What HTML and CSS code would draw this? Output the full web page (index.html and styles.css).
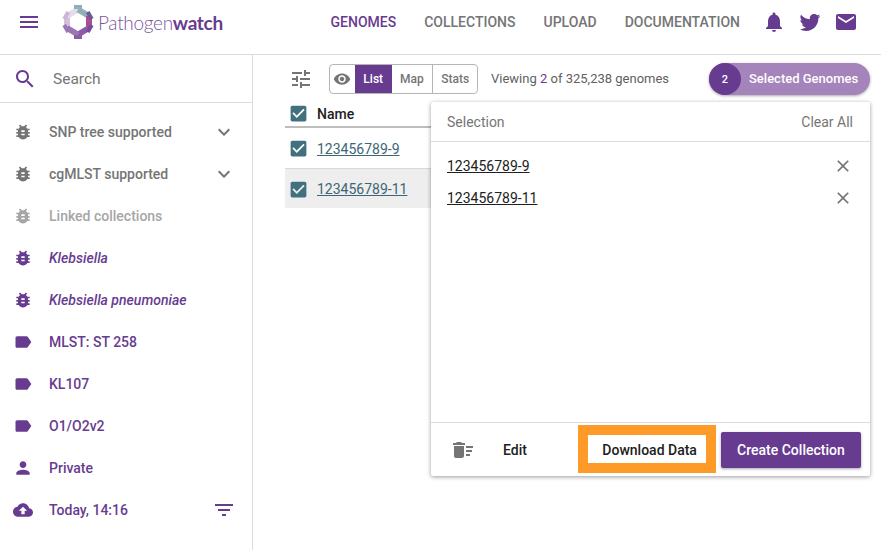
FILE: index.html
```html
<!DOCTYPE html>
<html lang="en">
<head>
<meta charset="utf-8">
<title>Pathogenwatch</title>
<link rel="stylesheet" href="styles.css">
</head>
<body>
<svg class="defs" width="0" height="0" aria-hidden="true">
  <symbol id="i-bug" viewBox="0 0 24 24"><path d="M20 8h-2.81c-.45-.78-1.07-1.45-1.82-1.96L17 4.41 15.59 3l-2.17 2.17C12.96 5.06 12.49 5 12 5c-.49 0-.96.06-1.41.17L8.41 3 7 4.41l1.62 1.63C7.88 6.55 7.26 7.22 6.81 8H4v2h2.09c-.05.33-.09.66-.09 1v1H4v2h2v1c0 .34.04.67.09 1H4v2h2.81c1.04 1.79 2.97 3 5.19 3s4.15-1.21 5.19-3H20v-2h-2.09c.05-.33.09-.66.09-1v-1h2v-2h-2v-1c0-.34-.04-.67-.09-1H20V8zm-6 8h-4v-2h4v2zm0-4h-4v-2h4v2z"/></symbol>
  <symbol id="i-label" viewBox="0 0 24 24"><path d="M17.63 5.84C17.27 5.33 16.67 5 16 5L5 5.01C3.9 5.01 3 5.9 3 7v10c0 1.1.9 1.99 2 1.99L16 19c.67 0 1.27-.33 1.63-.84L22 12l-4.37-6.16z"/></symbol>
  <symbol id="i-more" viewBox="0 0 24 24"><path d="M16.59 8.59L12 13.17 7.41 8.59 6 10l6 6 6-6z"/></symbol>
  <symbol id="i-check" viewBox="0 0 24 24"><path d="M19 3H5c-1.11 0-2 .9-2 2v14c0 1.1.89 2 2 2h14c1.11 0 2-.9 2-2V5c0-1.1-.89-2-2-2zm-9 14l-5-5 1.41-1.41L10 14.17l7.59-7.59L19 8l-9 9z"/></symbol>
  <symbol id="i-close" viewBox="0 0 24 24"><path d="M19 6.41L17.59 5 12 10.59 6.41 5 5 6.41 10.59 12 5 17.59 6.41 19 12 13.41 17.59 19 19 17.59 13.41 12z"/></symbol>
</svg>

<header class="topbar">
  <svg class="icon menu-btn" viewBox="0 0 24 24"><path d="M3 18h18v-2H3v2zm0-5h18v-2H3v2zm0-7v2h18V6H3z"/></svg>
  <svg class="logo-mark" viewBox="0 0 34 34" width="34" height="34">
    <g fill="none" stroke-width="6">
      <path stroke="#d3c0dd" d="M6 11 V23"/>
      <path stroke="#e4dbeb" d="M6 11 L17 4.5"/>
      <path stroke="#8fb0b8" d="M17 4.5 L28 11"/>
      <path stroke="#a84f94" d="M28 11 V23"/>
      <path stroke="#8a5ea6" d="M28 23 L17 29.5"/>
      <path stroke="#9877b3" d="M17 29.5 L6 23"/>
    </g>
    <g fill="none" stroke-width="8">
      <path stroke="#c9b6d6" d="M3.5 9.5 L7 11.5"/>
      <path stroke="#8fb0b8" d="M17 0 V4"/>
      <path stroke="#6c5a92" d="M30.5 9.5 L27 11.5"/>
      <path stroke="#7d4a9b" d="M30.5 24.5 L27 22.5"/>
      <path stroke="#8a5ea6" d="M17 34 V30"/>
      <path stroke="#9877b3" d="M3.5 24.5 L7 22.5"/>
    </g>
  </svg>
  <div class="logo-text">Pathogen<b>watch</b></div>
  <nav class="nav">
    <a class="nav-link active">Genomes</a>
    <a class="nav-link">Collections</a>
    <a class="nav-link">Upload</a>
    <a class="nav-link">Documentation</a>
  </nav>
  <div class="top-icons">
    <svg class="icon" viewBox="0 0 24 24"><path d="M12 22c1.1 0 2-.9 2-2h-4c0 1.1.89 2 2 2zm6-6v-5c0-3.07-1.64-5.64-4.5-6.32V4c0-.83-.67-1.5-1.5-1.5s-1.5.67-1.5 1.5v.68C7.63 5.36 6 7.92 6 11v5l-2 2v1h16v-1l-2-2z"/></svg>
    <svg class="icon" viewBox="0 0 24 24"><path d="M22.46,6C21.69,6.35 20.86,6.58 20,6.69C20.88,6.16 21.56,5.32 21.88,4.31C21.05,4.81 20.13,5.16 19.16,5.36C18.37,4.5 17.26,4 16,4C13.65,4 11.73,5.92 11.73,8.29C11.73,8.63 11.77,8.96 11.84,9.27C8.28,9.09 5.11,7.38 3,4.79C2.63,5.42 2.42,6.16 2.42,6.94C2.42,8.43 3.17,9.75 4.33,10.5C3.62,10.5 2.96,10.3 2.38,10C2.38,10 2.38,10 2.38,10.03C2.38,12.11 3.86,13.85 5.82,14.24C5.46,14.34 5.08,14.39 4.69,14.39C4.42,14.39 4.15,14.36 3.89,14.31C4.43,16 6,17.26 7.89,17.29C6.43,18.45 4.58,19.13 2.56,19.13C2.22,19.13 1.88,19.11 1.54,19.07C3.44,20.29 5.7,21 8.12,21C16,21 20.33,14.46 20.33,8.79C20.33,8.6 20.33,8.42 20.32,8.23C21.16,7.63 21.88,6.87 22.46,6Z"/></svg>
    <svg class="icon" viewBox="0 0 24 24"><path d="M20 4H4c-1.1 0-1.99.9-1.99 2L2 18c0 1.1.9 2 2 2h16c1.1 0 2-.9 2-2V6c0-1.1-.9-2-2-2zm0 4l-8 5-8-5V6l8 5 8-5v2z"/></svg>
  </div>
</header>

<div class="layout">
  <aside class="sidebar">
    <div class="search">
      <svg class="icon" viewBox="0 0 24 24"><path d="M15.5 14h-.79l-.28-.27C15.41 12.59 16 11.11 16 9.5 16 5.91 13.09 3 9.5 3S3 5.91 3 9.5 5.91 16 9.5 16c1.61 0 3.09-.59 4.23-1.57l.27.28v.79l5 4.99L20.49 19l-4.99-5zm-6 0C7.01 14 5 11.99 5 9.5S7.01 5 9.5 5 14 7.01 14 9.5 11.99 14 9.5 14z"/></svg>
      <span>Search</span>
    </div>
    <ul class="filters">
      <li class="filter grey"><svg class="ficon"><use href="#i-bug"/></svg><span>SNP tree supported</span><svg class="icon more"><use href="#i-more"/></svg></li>
      <li class="filter grey"><svg class="ficon"><use href="#i-bug"/></svg><span>cgMLST supported</span><svg class="icon more"><use href="#i-more"/></svg></li>
      <li class="filter muted"><svg class="ficon"><use href="#i-bug"/></svg><span>Linked collections</span></li>
      <li class="filter italic"><svg class="ficon"><use href="#i-bug"/></svg><span>Klebsiella</span></li>
      <li class="filter italic"><svg class="ficon"><use href="#i-bug"/></svg><span>Klebsiella pneumoniae</span></li>
      <li class="filter"><svg class="ficon"><use href="#i-label"/></svg><span>MLST: ST 258</span></li>
      <li class="filter"><svg class="ficon"><use href="#i-label"/></svg><span>KL107</span></li>
      <li class="filter"><svg class="ficon"><use href="#i-label"/></svg><span>O1/O2v2</span></li>
      <li class="filter"><svg class="ficon" viewBox="0 0 24 24"><path d="M12 12c2.21 0 4-1.79 4-4s-1.79-4-4-4-4 1.79-4 4 1.79 4 4 4zm0 2c-2.67 0-8 1.34-8 4v2h16v-2c0-2.66-5.33-4-8-4z"/></svg><span>Private</span></li>
      <li class="filter"><svg class="ficon" viewBox="0 0 24 24"><path d="M19.35 10.04C18.67 6.59 15.64 4 12 4 9.11 4 6.6 5.64 5.35 8.04 2.34 8.36 0 10.91 0 14c0 3.31 2.69 6 6 6h13c2.76 0 5-2.24 5-5 0-2.64-2.05-4.78-4.65-4.96zM14 13v4h-4v-4H7l5-5 5 5h-3z"/></svg><span>Today, 14:16</span><svg class="icon more" viewBox="0 0 24 24"><path d="M10 18h4v-2h-4v2zM3 6v2h18V6H3zm3 7h12v-2H6v2z"/></svg></li>
    </ul>
  </aside>

  <main class="content">
    <div class="toolbar">
      <svg class="icon tune" viewBox="0 0 24 24"><path d="M3 17v2h6v-2H3zM3 5v2h10V5H3zm10 16v-2h8v-2h-8v-2h-2v6h2zM7 9v2H3v2h4v2h2V9H7zm14 4v-2H11v2h10zm-6-4h2V7h4V5h-4V3h-2v6z"/></svg>
      <div class="toggle">
        <span class="seg eye"><svg viewBox="0 0 24 24" width="18" height="18"><path d="M12 4.5C7 4.5 2.73 7.61 1 12c1.73 4.39 6 7.5 11 7.5s9.27-3.11 11-7.5c-1.73-4.39-6-7.5-11-7.5zM12 17c-2.76 0-5-2.24-5-5s2.24-5 5-5 5 2.24 5 5-2.24 5-5 5zm0-8c-1.66 0-3 1.34-3 3s1.34 3 3 3 3-1.34 3-3-1.34-3-3-3z"/></svg></span>
        <span class="seg seg-list">List</span>
        <span class="seg seg-map">Map</span>
        <span class="seg seg-stats">Stats</span>
      </div>
      <div class="viewing">Viewing <b>2</b> of 325,238 genomes</div>
      <div class="chip"><span class="chip-count">2</span><span class="chip-label">Selected Genomes</span></div>
    </div>
    <div class="table">
      <div class="row head"><svg class="check"><use href="#i-check"/></svg><span>Name</span></div>
      <div class="row"><svg class="check"><use href="#i-check"/></svg><a class="glink">123456789-9</a></div>
      <div class="row alt"><svg class="check"><use href="#i-check"/></svg><a class="glink">123456789-11</a></div>
    </div>

    <section class="popup">
      <div class="pop-head"><span>Selection</span><span>Clear All</span></div>
      <div class="pop-list">
        <div class="pop-item"><a>123456789-9</a><svg class="x"><use href="#i-close"/></svg></div>
        <div class="pop-item"><a>123456789-11</a><svg class="x"><use href="#i-close"/></svg></div>
      </div>
      <div class="pop-foot">
        <svg class="sweep" viewBox="0 0 24 24"><path d="M15 16h4v2h-4zm0-8h7v2h-7zm0 4h6v2h-6zM3 18c0 1.1.9 2 2 2h6c1.1 0 2-.9 2-2V8H3v10zM14 5h-3l-1-1H6L5 5H2v2h12z"/></svg>
        <span class="edit">Edit</span>
        <span class="download">Download Data</span>
        <span class="create">Create Collection</span>
      </div>
    </section>
  </main>
</div>
</body>
</html>
```
FILE: styles.css
```css
* { box-sizing: border-box; }
html, body { height: 100%; }
body {
  margin: 0;
  font-family: Roboto, "Liberation Sans", sans-serif;
  font-size: 14px;
  color: #212121;
  background: #fff;
  display: flex;
  flex-direction: column;
  overflow: hidden;
}
.defs { position: absolute; }
.icon { width: 24px; height: 24px; fill: #673c90; flex: none; display: block; }

.topbar {
  height: 55px;
  flex: none;
  display: flex;
  align-items: center;
  border-bottom: 1px solid #dcdcdc;
  padding: 0 23px 10px 17px;
}
.logo-mark { flex: none; margin: 0 3px 0 20px; }
.logo-text {
  font-family: Lato, "Open Sans", sans-serif;
  font-size: 19px;
  font-weight: 300;
  letter-spacing: -0.3px;
  color: #7b559f;
}
.logo-text b { font-weight: 700; color: #673c90; }
.nav { margin-left: auto; display: flex; gap: 28px; }
.nav-link {
  font-size: 14px;
  font-weight: 500;
  text-transform: uppercase;
  color: #757575;
}
.nav-link.active { color: #673c90; }
.top-icons { display: flex; gap: 12px; margin-left: 22px; }

.layout { flex: 1; display: flex; min-height: 0; }
.sidebar { width: 253px; flex: none; border-right: 1px solid #dcdcdc; }
.search {
  height: 48px;
  display: flex;
  align-items: center;
  gap: 16px;
  padding-left: 13px;
  border-bottom: 1px solid #dcdcdc;
  font-size: 15.5px;
  color: #757575;
}
.filters { list-style: none; margin: 8px 0 0; padding: 0; }
.filter {
  height: 42px;
  display: flex;
  align-items: center;
  padding: 0 16px 0 13px;
  font-weight: 500;
  color: #673c90;
  fill: #673c90;
}
.ficon { width: 20px; height: 20px; flex: none; margin-right: 16px; fill: inherit; }
.filter .more { margin-left: auto; fill: #757575; }
.filter:last-child .more { fill: #673c90; }
.grey { color: #757575; fill: #757575; }
.muted { color: #a6a6a6; fill: #a6a6a6; }
.italic { font-style: italic; }

.content { flex: 1; position: relative; min-width: 0; }
.toolbar {
  height: 48px;
  display: flex;
  align-items: center;
  padding: 0 11px 0 36px;
}
.tune { fill: #757575; }
.toggle {
  margin-left: 16px;
  height: 30px;
  width: 149px;
  display: flex;
  border: 1px solid #b5b5b5;
  border-radius: 4px;
  overflow: hidden;
  font-size: 12px;
  font-weight: 500;
  color: #757575;
}
.seg { display: flex; align-items: center; justify-content: center; border-left: 1px solid #b5b5b5; }
.eye { width: 25px; border-left: 0; fill: #757575; }
.seg-list { width: 37px; background: #673c90; color: #fff; border-left: 0; }
.seg-map { width: 41px; border-left: 0; }
.seg-stats { width: 45px; }
.viewing { margin-left: 13px; padding-bottom: 1px; font-size: 13px; color: #616161; white-space: nowrap; }
.viewing b { color: #673c90; font-weight: 400; }
.chip {
  margin-left: auto;
  width: 161px;
  height: 32px;
  border-radius: 16px;
  background: #a583bb;
  color: #fff;
  display: flex;
  align-items: center;
  font-size: 13px;
  font-weight: 500;
  box-shadow: 0 1px 3px rgba(0, 0, 0, .35);
}
.chip-label { padding-bottom: 1px; }
.chip-count {
  width: 32px;
  height: 32px;
  border-radius: 50%;
  background: #673c90;
  display: flex;
  align-items: center;
  justify-content: center;
  font-size: 11px;
  margin-right: 8px;
}

.table { margin-left: 32px; width: 200px; }
.row {
  height: 40px;
  display: flex;
  align-items: center;
  padding: 1px 0 0 3px;
  gap: 8px;
  font-size: 14px;
}
.row.head {
  height: 25px;
  font-weight: 500;
  border-bottom: 2px solid #bdbdbd;
  padding: 0 0 2px 3px;
}
.row.alt { background: #eee; border-top: 1px solid #d8d8d8; }
.check { width: 21px; height: 21px; flex: none; fill: #41707f; }
.glink { color: #3c6676; text-decoration: underline; }

.popup {
  position: absolute;
  left: 178px;
  top: 47px;
  width: 439px;
  height: 374px;
  background: #fff;
  display: flex;
  flex-direction: column;
  box-shadow: 0 1px 4px rgba(0, 0, 0, .4);
  border-radius: 2px;
}
.pop-head {
  height: 40px;
  flex: none;
  display: flex;
  align-items: center;
  justify-content: space-between;
  padding: 0 17px 0 16px;
  border-bottom: 1px solid #dcdcdc;
  font-size: 14px;
  color: #757575;
}
.pop-list { flex: 1; padding-top: 8px; }
.pop-item {
  height: 32px;
  display: flex;
  align-items: center;
  justify-content: space-between;
  padding: 0 17px 0 16px;
  font-size: 14px;
  color: #212121;
}
.pop-item a { text-decoration: underline; }
.x { width: 20px; height: 20px; fill: #757575; flex: none; }
.pop-foot {
  height: 54px;
  flex: none;
  display: flex;
  align-items: center;
  border-top: 1px solid #dcdcdc;
  padding-top: 1px;
  font-weight: 500;
  font-size: 14px;
}
.sweep { width: 24px; height: 24px; fill: #757575; margin-left: 20px; flex: none; }
.edit { margin-left: 28px; color: #212121; }
.download {
  margin-left: 51px;
  margin-top: -2px;
  width: 138px;
  height: 48px;
  border: 10px solid #fe9a28;
  display: flex;
  align-items: center;
  justify-content: flex-end;
  padding: 1px 9px 0 0;
  background: #fff;
}
.create {
  margin-left: 5px;
  width: 140px;
  height: 36px;
  background: #673c90;
  color: #fff;
  border-radius: 2px;
  display: flex;
  align-items: center;
  justify-content: center;
  box-shadow: 0 1px 3px rgba(0, 0, 0, .35);
}
```
